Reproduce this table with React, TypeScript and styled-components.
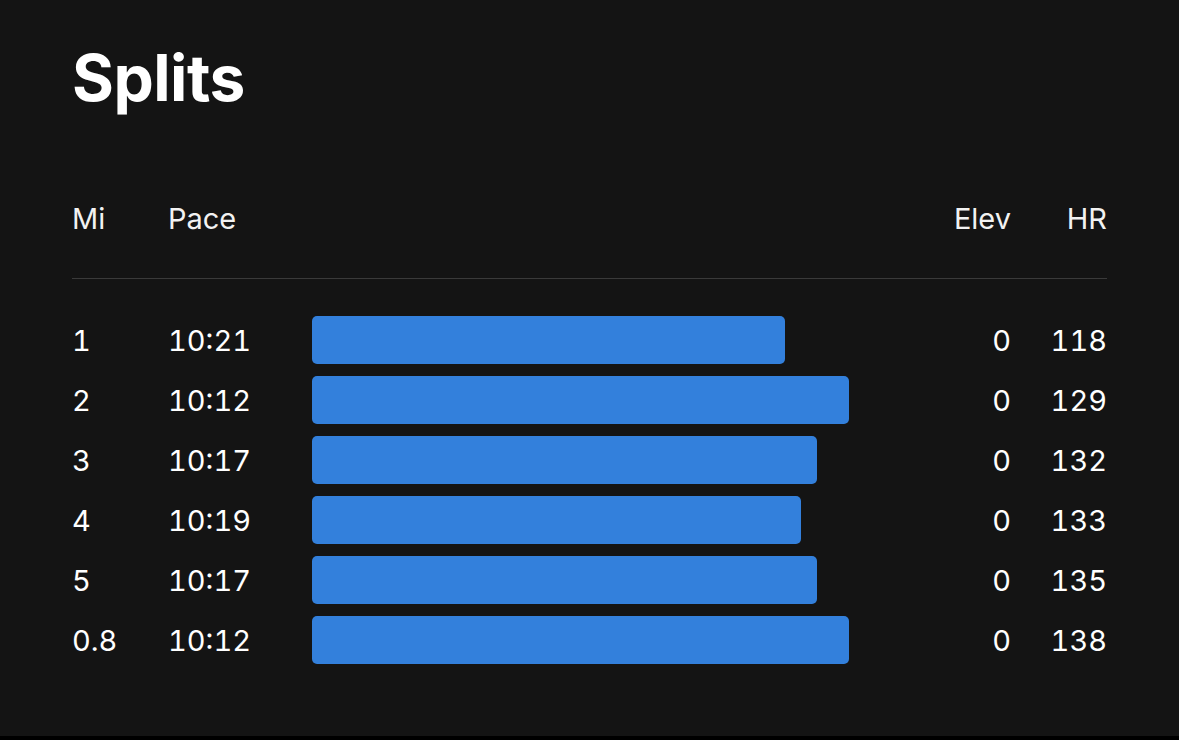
import styled, { createGlobalStyle } from 'styled-components';

interface Split {
  mi: string
  pace: string
  bar: number
  elev: number
  hr: number
}

const splits: Split[] = [
  { mi: '1', pace: '10:21', bar: 473, elev: 0, hr: 118 },
  { mi: '2', pace: '10:12', bar: 537, elev: 0, hr: 129 },
  { mi: '3', pace: '10:17', bar: 505, elev: 0, hr: 132 },
  { mi: '4', pace: '10:19', bar: 489, elev: 0, hr: 133 },
  { mi: '5', pace: '10:17', bar: 505, elev: 0, hr: 135 },
  { mi: '0.8', pace: '10:12', bar: 537, elev: 0, hr: 138 },
]

const GlobalStyle = createGlobalStyle`
  html, body {
    margin: 0;
    background: #000;
  }
  body {
    font-family: Inter, "Noto Sans", sans-serif;
    color: #fff;
  }
`

const Panel = styled.section`
  height: 736px;
  box-sizing: border-box;
  padding: 38px 72px 0;
  background: #141414;
`

const Title = styled.h1`
  margin: 0;
  font-size: 64px;
  line-height: 80px;
  font-weight: 700;
  letter-spacing: -0.5px;
`

const Grid = styled.div`
  display: grid;
  grid-template-columns: 96px 144px 1fr 120px 96px;
  align-items: center;
`

const Header = styled(Grid)`
  margin-top: 70px;
  height: 60px;
  padding-bottom: 30px;
  border-bottom: 1px solid #3a3a3a;
  font-size: 29px;
  color: #f2f2f2;
`

const Rows = styled.div`
  display: flex;
  flex-direction: column;
  gap: 12px;
  margin-top: 37px;
`

const Row = styled(Grid)`
  height: 48px;
  font-size: 29px;
  font-variant-numeric: tabular-nums;
`

const Cell = styled.span<{ $right?: boolean }>`
  text-align: ${p => (p.$right ? 'right' : 'left')};
  white-space: nowrap;
`

const Bar = styled.div`
  height: 48px;
  border-radius: 5px;
  background: #3380dc;
`

export default function App() {
  return (
    <>
      <GlobalStyle />
      <Panel>
        <Title>Splits</Title>
        <Header>
          <Cell>Mi</Cell>
          <Cell>Pace</Cell>
          <span />
          <Cell $right>Elev</Cell>
          <Cell $right>HR</Cell>
        </Header>
        <Rows>
          {splits.map(s => (
            <Row key={s.mi}>
              <Cell>{s.mi}</Cell>
              <Cell>{s.pace}</Cell>
              <Bar style={{ width: s.bar }} />
              <Cell $right>{s.elev}</Cell>
              <Cell $right>{s.hr}</Cell>
            </Row>
          ))}
        </Rows>
      </Panel>
    </>
  )
}
